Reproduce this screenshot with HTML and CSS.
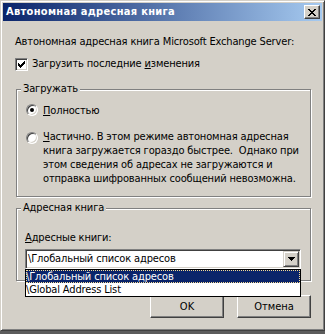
FILE: index.html
```html
<!DOCTYPE html>
<html lang="ru">
<head>
<meta charset="utf-8">
<title>Автономная адресная книга</title>
<link rel="stylesheet" href="styles.css">
</head>
<body>
<div class="window">
  <div class="titlebar">
    <span class="title">Автономная адресная книга</span>
    <span class="close"><svg width="8" height="7" viewBox="0 0 8 7" shape-rendering="crispEdges"><path d="M0 0h2v1h-2z M6 0h2v1h-2z M1 1h2v1h-2z M5 1h2v1h-2z M2 2h4v1h-4z M3 3h2v1h-2z M2 4h4v1h-4z M1 5h2v1h-2z M5 5h2v1h-2z M0 6h2v1h-2z M6 6h2v1h-2z" fill="#000"/></svg></span>
  </div>
  <div class="content">
    <p class="intro">Автономная адресная книга Microsoft Exchange Server:</p>
    <div class="check-row">
      <span class="checkbox"><svg width="7" height="7" viewBox="0 0 7 7" shape-rendering="crispEdges"><path d="M6 0h1v1h-1z M5 1h2v1h-2z M0 2h1v1h-1z M4 2h3v1h-3z M0 3h2v1h-2z M3 3h3v1h-3z M0 4h5v1h-5z M1 5h3v1h-3z M2 6h1v1h-1z" fill="#000"/></svg></span>
      <span>Загрузить последние <u>и</u>зменения</span>
    </div>
    <fieldset class="group g1">
      <legend>Загружать</legend>
      <div class="radio-row r1"><span class="radio on"><span class="dot"></span></span><span><u>П</u>олностью</span></div>
      <div class="radio-row r2"><span class="radio"></span><span class="long"><u>Ч</u>астично. В этом режиме автономная адресная<br>книга загружается гораздо быстрее.&nbsp; Однако при<br>этом сведения об адресах не загружаются и<br>отправка шифрованных сообщений невозможна.</span></div>
    </fieldset>
    <fieldset class="group g2">
      <legend>Адресная книга</legend>
      <div class="field-label"><u>А</u>дресные книги:</div>
      <div class="combo-wrap">
        <div class="combo">
          <span class="combo-text">\Глобальный список адресов</span>
          <span class="combo-btn"><svg width="7" height="4" viewBox="0 0 7 4" shape-rendering="crispEdges"><path d="M0 0h7v1h-7z M1 1h5v1h-5z M2 2h3v1h-3z M3 3h1v1h-1z" fill="#000"/></svg></span>
        </div>
        <ul class="dropdown">
          <li class="sel">\Глобальный список адресов</li>
          <li>\Global Address List</li>
        </ul>
      </div>
    </fieldset>
    <div class="buttons">
      <button class="btn">OK</button>
      <button class="btn">Отмена</button>
    </div>
  </div>
</div>
</body>
</html>
```

FILE: styles.css
```css
* { box-sizing: border-box; }
html, body { margin: 0; padding: 0; }
body {
  width: 325px;
  height: 334px;
  overflow: hidden;
  background: #5c5c5c;
  font-family: "DejaVu Sans Condensed", "DejaVu Sans", sans-serif;
  font-size: 11px;
  line-height: 14px;
  letter-spacing: -0.15px;
  color: #000;
}
u { text-underline-offset: 1px; }
.window {
  width: 325px;
  height: 331px;
  background: #d4d0c8;
  border: 1px solid;
  border-color: #d4d0c8 #404040 #404040 #d4d0c8;
  box-shadow: inset 1px 1px #fff, inset -1px -1px #808080;
  padding: 2px;
  display: flex;
  flex-direction: column;
}
.titlebar {
  height: 18px;
  flex: none;
  background: linear-gradient(to right, #0a246a, #a6caf0);
  display: flex;
  align-items: center;
  justify-content: space-between;
  padding: 0 2px 0 3px;
}
.title { color: #fff; font-weight: bold; letter-spacing: 0.3px; }
.close {
  width: 16px;
  height: 14px;
  background: #d4d0c8;
  border: 1px solid;
  border-color: #fff #404040 #404040 #fff;
  box-shadow: inset -1px -1px #808080;
  display: flex;
  align-items: center;
  justify-content: center;
}
.close svg { display: block; }
.content {
  flex: 1;
  display: flex;
  flex-direction: column;
  padding: 0 11px 0 12px;
}
.intro { margin: 14px 0 0; }
.check-row { display: flex; margin-top: 8px; gap: 4px; }
.checkbox {
  width: 13px;
  height: 13px;
  margin-top: 1px;
  background: #fff;
  border: 1px solid;
  border-color: #808080 #fff #fff #808080;
  box-shadow: inset 1px 1px #404040, inset -1px -1px #d4d0c8;
  display: flex;
  align-items: center;
  justify-content: center;
}
.checkbox svg { display: block; }
.group {
  width: 295px;
  margin: 11px 0 0 1px;
  padding: 0;
  border: 1px solid #808080;
  box-shadow: inset 1px 1px #fff, 1px 1px #fff;
  min-width: 0;
}
.group legend {
  margin-left: 4px;
  padding: 0 2px;
  background: #d4d0c8;
  line-height: 14px;
}
.g1 { padding-bottom: 10px; }
.g2 { margin-top: 4px; padding-bottom: 11px; }
.radio-row { display: flex; gap: 5px; margin-left: 9px; }
.r1 { margin-top: 8px; }
.r2 { margin-top: 12px; }
.radio {
  width: 12px;
  height: 12px;
  flex: none;
  border-radius: 50%;
  background: #fff;
  border: 1px solid;
  border-color: #808080 #fff #fff #808080;
  box-shadow: inset 1px 1px #404040, inset -1px -1px #d4d0c8;
  display: flex;
  align-items: center;
  justify-content: center;
}
.r2 .radio { margin-top: 2px; }
.dot { width: 4px; height: 4px; border-radius: 50%; background: #000; }
.long { white-space: nowrap; }
.field-label { margin: 16px 0 0 8px; }
.combo-wrap { position: relative; width: 276px; margin: 4px 0 0 8px; }
.combo {
  height: 20px;
  display: flex;
  align-items: center;
  background: #fff;
  border: 1px solid;
  border-color: #808080 #fff #fff #808080;
  box-shadow: inset 1px 1px #404040, inset -1px -1px #d4d0c8;
  padding: 1px;
}
.combo-text { flex: 1; padding-left: 1px; }
.combo-btn {
  width: 16px;
  height: 16px;
  background: #d4d0c8;
  border: 1px solid;
  border-color: #d4d0c8 #404040 #404040 #d4d0c8;
  box-shadow: inset 1px 1px #fff, inset -1px -1px #808080;
  display: flex;
  align-items: center;
  justify-content: center;
}
.combo-btn svg { display: block; }
.dropdown {
  position: absolute;
  top: 20px;
  left: 0;
  width: 276px;
  margin: 0;
  padding: 0;
  list-style: none;
  background: #fff;
  border: 1px solid #000;
}
.dropdown li { height: 13px; line-height: 13px; }
.dropdown li.sel {
  background: #0a246a;
  color: #fff;
  outline: 1px dotted #f5db95;
  outline-offset: -1px;
}
.buttons {
  display: flex;
  justify-content: flex-end;
  gap: 13px;
  margin-top: 14px;
}
.btn {
  width: 74px;
  height: 23px;
  padding: 0;
  font: inherit;
  color: #000;
  background: #d4d0c8;
  border: 1px solid;
  border-color: #fff #404040 #404040 #fff;
  box-shadow: inset -1px -1px #808080;
}
```
